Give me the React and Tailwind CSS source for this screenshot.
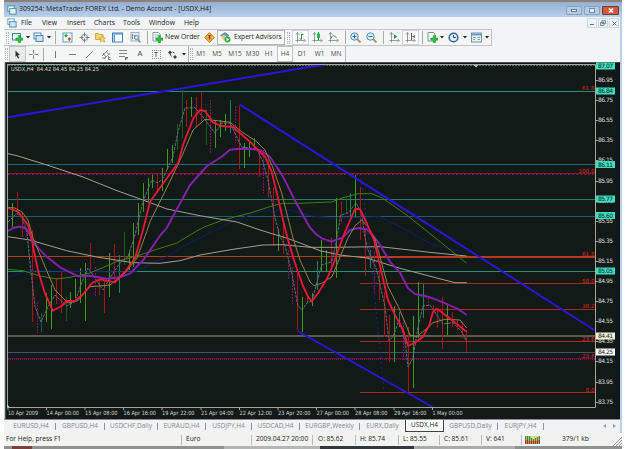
import React from 'react';

const MENUS = [
  { label: 'File', w: 'w-[21px]' },
  { label: 'View', w: 'w-[25px]' },
  { label: 'Insert', w: 'w-[27px]' },
  { label: 'Charts', w: 'w-[29px]' },
  { label: 'Tools', w: 'w-[26px]' },
  { label: 'Window', w: 'w-[35px]' },
  { label: 'Help', w: 'w-[22px]' },
];

const TIMEFRAMES = [
  { label: 'M1', w: 'w-[14px]' },
  { label: 'M5', w: 'w-[18px]' },
  { label: 'M15', w: 'w-[18px]' },
  { label: 'M30', w: 'w-[17px]' },
  { label: 'H1', w: 'w-[16px]' },
  { label: 'H4', w: 'w-[16px]', active: true },
  { label: 'D1', w: 'w-[18px]' },
  { label: 'W1', w: 'w-[17px]' },
  { label: 'MN', w: 'w-[16px]' },
];

const TABS = [
  { label: 'EURUSD,H4', w: 'w-[49px]' },
  { label: 'GBPUSD,H4', w: 'w-[49px]' },
  { label: 'USDCHF,Daily', w: 'w-[53px]' },
  { label: 'EURAUD,H4', w: 'w-[48px]' },
  { label: 'USDJPY,H4', w: 'w-[46px]' },
  { label: 'USDCAD,H4', w: 'w-[48px]' },
  { label: 'EURGBP,Weekly', w: 'w-[60px]' },
  { label: 'EURX,Daily', w: 'w-[45px]' },
  { label: 'USDX,H4', w: 'w-[39px]', active: true },
  { label: 'GBPUSD,Daily', w: 'w-[54px]' },
  { label: 'EURJPY,H4', w: 'w-[46px]' },
];

const STATUS = [
  { label: 'For Help, press F1', w: 'w-[178px] pl-[2px]' },
  { label: 'Euro', w: 'w-[70px] pl-[4px]' },
  { label: '2009.04.27 20:00', w: 'w-[61px] pl-[4px]' },
  { label: 'O: 85.62', w: 'w-[43px] pl-[5px]' },
  { label: 'H: 85.74', w: 'w-[43px] pl-[4px]' },
  { label: 'L: 85.55', w: 'w-[41px] pl-[4px]' },
  { label: 'C: 85.61', w: 'w-[42px] pl-[4px]' },
  { label: 'V: 641', w: 'w-[40px] pl-[4px]' },
];

const GREEN = '#3f9a12';
const RED = '#b30d16';
const TEAL = '#1f8060';
const PINK = '#8a0f68';
const DARK = '#1c5a1c';

// [x, high, low, colour]
const BARS = [
  [12.5, 203, 227, GREEN], [17.5, 192, 215, RED], [22.5, 212, 237, RED],
  [32.5, 230, 322, RED], [37.5, 302, 333, PINK], [41.5, 313, 332, DARK],
  [46.5, 293, 322, GREEN], [51.5, 285, 329, GREEN], [56.5, 278, 304, RED],
  [61.5, 272, 313, RED], [66.5, 297, 321, DARK], [70.5, 292, 308, GREEN],
  [75.5, 279, 298, GREEN], [80.5, 268, 303, GREEN], [85.5, 263, 321, GREEN],
  [90.5, 243, 270, RED], [95.5, 267, 297, PINK], [99.5, 280, 295, RED],
  [104.5, 277, 313, RED], [109.5, 253, 297, GREEN], [114.5, 244, 283, RED],
  [119.5, 255, 293, TEAL], [124.5, 232, 265, DARK], [129.5, 252, 270, GREEN],
  [133.5, 223, 267, GREEN], [138.5, 203, 235, GREEN], [143.5, 183, 212, GREEN],
  [148.5, 178, 201, GREEN], [152.5, 175, 188, GREEN], [157.5, 174, 190, RED],
  [162.5, 168, 191, GREEN], [167.5, 149, 170, GREEN], [172.5, 145, 163, GREEN],
  [177.5, 124, 150, DARK], [182.5, 89, 138, DARK], [186.5, 100, 127, RED],
  [191.5, 97, 117, GREEN], [196.5, 97, 127, RED], [201.5, 92, 121, RED],
  [206.5, 109, 145, DARK], [210.5, 100, 154, PINK], [215.5, 121, 148, GREEN],
  [220.5, 120, 137, GREEN], [225.5, 114, 131, GREEN], [230.5, 100, 133, TEAL],
  [235.5, 106, 143, PINK], [239.5, 105, 169, RED], [244.5, 143, 168, GREEN],
  [249.5, 142, 157, GREEN], [254.5, 138, 150, GREEN], [259.5, 150, 177, RED],
  [263.5, 150, 193, PINK], [268.5, 158, 198, RED], [273.5, 187, 246, RED],
  [278.5, 229, 251, GREEN], [283.5, 223, 254, RED], [288.5, 250, 279, PINK],
  [292.5, 267, 304, PINK], [297.5, 273, 330, RED], [302.5, 297, 332, GREEN],
  [307.5, 295, 303, RED], [312.5, 293, 306, GREEN], [317.5, 261, 290, TEAL],
  [321.5, 240, 272, GREEN], [326.5, 250, 272, GREEN], [331.5, 238, 270, RED],
  [336.5, 198, 278, GREEN], [341.5, 202, 222, RED], [346.5, 198, 214, DARK],
  [350.5, 193, 216, TEAL], [355.5, 175, 218, GREEN], [360.5, 187, 240, RED],
  [365.5, 230, 276, RED], [370.5, 250, 268, TEAL], [374.5, 252, 292, PINK],
  [379.5, 270, 300, RED], [384.5, 292, 337, RED], [389.5, 315, 362, RED],
  [394.5, 306, 362, GREEN], [399.5, 312, 327, TEAL], [403.5, 319, 360, PINK],
  [408.5, 327, 392, RED], [413.5, 316, 388, GREEN], [418.5, 282, 338, GREEN],
  [423.5, 284, 318, TEAL], [428.5, 298, 308, PINK], [433.5, 305, 310, RED],
  [437.5, 308, 328, RED], [442.5, 297, 349, RED], [447.5, 305, 335, GREEN],
  [452.5, 312, 327, RED], [457.5, 320, 330, RED], [462.5, 322, 338, RED],
  [466.5, 330, 352, RED],
];

const MA_PURPLE = '8,231 13,228 19,226.5 26,228.5 30,235 33,242.7 46.7,256.7 60,267.3 78.3,276.3 90,275.7 106.7,278.7 120,277.3 130,273.7 143.3,260 160,235.7 166.7,228 190,185 207,166 221.7,156.7 230,149.7 237,149 250,149 260,150 270,156.7 283,176.7 296.7,204 310,227.7 316,234 321.7,238.3 331.7,241.7 343,237.3 350,230 359,228 367,229.5 375,238 380,245 390,261.7 400,272.7 408,288.3 415,294 428,296.7 443,302.3 458,309 466.7,315';
const MA_RED = '8,208 18,211.7 28,225 32,240 33.3,248 38.3,271.7 45,293.3 52.7,310.7 61.7,306 66.7,301 75,301 83.3,294 91.7,283.3 100,279.3 115,282.3 125,271.7 135,258.3 143,230 150,201.7 165,180.7 178.3,162.7 183.3,144 193.3,118.3 200,110 205,111 213,122.3 221.7,126 233,127 250,141.7 258,150 265,156.7 271.7,171.7 278,198 283,220 288,240 295,263.3 303,286 308,296.7 312,301.3 318,293.3 326.7,279.3 333,265 343,236.7 355,209 360,209 366.7,223 374,240 381.7,273.3 388,300 395,315 403,330 408,346 415,342.7 423,336.7 429.3,325 433,311.7 437,308.7 446.7,316 458,325 466.7,331.7';
const MA_YELLOW = '8,207.5 15,208 22,212 28,220 33,238 45,266.7 55,290 68,303 78,300.7 90,286.7 110,285 125,273 137,258 146.7,231.7 150,221.7 166.7,188 181.7,156.7 193,130 205,119.3 220,121 230,122.3 241.7,131.7 256.7,141.7 265,150 273,168 281.7,193 293,238 300,260 310,282 314,285.7 321.7,283.3 332,276.7 341.7,253 348,238 355,225.7 361.7,220 368,226.7 375,239 381.7,263 388,286.7 398,306 404,320 410,335 416.7,336.7 425,330 433,322.7 445,319.3 460,320 466.7,328';
const MA_SLATE = '8,222 17,213 22,217 27,233 30,263 35,306.7 41,322 48,306.7 55,295 66.7,306 75,301.7 81.7,283 88,268 95,278 103,290 111.7,275 120,263 128,256.7 135,235 143,201.7 151.7,180 158,183 163,178 173,156.7 178,131.7 185,108 195,107.7 203,117 215,133 221.7,123 230,123 236.7,136.7 241.7,147 256.7,149 263,161.7 268,180 275,218 280,236.7 285,245 291.7,273 297.7,305 302,310 308,301.7 312,301.7 316.7,283 321.7,265 331.7,261.7 336,243 340.7,215 348,213 356,203 361.7,213 365,238 368,250 376.7,270 385,306.7 389,340.7 393,336.7 399,320 405,340 408,367 413,358 418,326.7 423,306 430,305 436.7,315 443,324 453,322.7 461.7,331.7 466.7,341.7';
const MA_WHITE_A = '8,153.7 17,155.7 47,165 83,177 117,190.7 143,200 167,209 200,215.7 237,222 260,230 288,238.5 300,243 320,250.7 340,255 366.7,258 400,268.3 433,277 455,282.7 466.7,282.7';
const MA_WHITE_B = '8,236.7 30,240 66.7,250.7 96.7,257 133,262.7 160,263.3 180,260.7 200,255 233,249.3 263,245 283,244.7 310,247.3 333,247.3 380,246.7 410,250 433,252.7 466.7,256';
const MA_GREEN = '8,269.3 23,270.7 40,276 56.7,279 70,277.3 90,273 116.7,261.7 140,255 160,248.3 176.7,243 196.7,231 205,226.7 223,220 250,213 273,205.7 283,203.3 300,203.3 331.7,202 343,197.7 358,193.7 371.7,193.7 381.7,197.7 406.7,215 436.7,239 466.7,263.3';
const MA_NAVY = '8,277 25,271.7 37,271 135,272 150,264 166.7,256.7 183,246.7 200,238 233,221 260,211.7 290,210 310,215.7 332,218 380,216.7 400,226.7 433,245 465,252.7';

const PRICES = [
  ['86.95', 80], ['86.75', 100], ['86.55', 120], ['86.35', 140], ['86.15', 160],
  ['85.95', 181], ['85.75', 201], ['85.55', 221], ['85.35', 241], ['85.15', 261],
  ['84.95', 281], ['84.75', 301], ['84.55', 321], ['84.35', 341], ['84.15', 361],
  ['83.95', 382], ['83.75', 402],
];

const PRICE_TAGS = [
  ['87.07', 66, '#3fdcc0'], ['86.84', 91, '#3fdcc0'], ['86.11', 164.5, '#3fdcc0'],
  ['85.77', 199, '#3fdcc0'], ['85.60', 215.5, '#3fdcc0'], ['85.05', 271, '#3fdcc0'],
  ['84.41', 336, '#f3efd2'], ['84.25', 352, '#ffffff'],
];

const FIBS = [
  ['61.8', 88], ['100.0', 171], ['61.8', 253.5], ['50.0', 280.5],
  ['38.2', 306], ['23.6', 338.5], ['23.6', 356], ['0.0', 389.5],
];

const DATES = [
  ['10 Apr 2009', 8], ['14 Apr 00:00', 46.5], ['15 Apr 08:00', 85], ['16 Apr 16:00', 123.5],
  ['19 Apr 22:00', 162], ['21 Apr 04:00', 201], ['22 Apr 12:00', 239.5], ['23 Apr 20:00', 278],
  ['27 Apr 00:00', 316.5], ['28 Apr 08:00', 355], ['29 Apr 16:00', 394], ['1 May 00:00', 432.5],
];

const Slot = ({ w, className = '', children }) => (
  <div className={`flex h-full shrink-0 items-center justify-center ${w} ${className}`}>{children}</div>
);

const Sep = () => <div className="h-[13px] w-px shrink-0 bg-[#a9adb1]"></div>;

const Grip = () => (
  <div className="h-[12px] w-[3px] shrink-0 border-x border-dotted border-[#aab6bd]"></div>
);

const Caret = () => (
  <svg className="h-[3px] w-[4px]" viewBox="0 0 4 3"><path d="M0 0h4L2 2.5z" fill="#222" /></svg>
);

const Icon = ({ children, size = 'h-[11px] w-[11px]' }) => (
  <svg className={`shrink-0 ${size}`} viewBox="0 0 11 11" fill="none">{children}</svg>
);

const PlusMark = () => <path d="M6.2 3.5h2.3V6H11v2.200H8.500v2.500H6.200V8.200H3.800V6h2.400z" fill="#25c640" stroke="#148a2a" strokeWidth=".5" />;

const Axes = () => (
  <path d="M2.5 .5v10M.5 8.5h9M1 2.5L2.500 .5 4 2.500M8.500 7l2 1.500-2 1.500" stroke="#7b8685" strokeWidth=".8" />
);

const TitleBar = () => (
  <div className="flex h-[15px] shrink-0 items-center bg-gradient-to-b from-[#94afcf] to-[#b9d0ec] pl-[3px] pr-[3px]">
    <Icon size="h-[10px] w-[10px]">
      <rect x="1" y="1" width="7" height="6" fill="#fff" stroke="#3f8f9c" />
      <rect x="3" y="4" width="7" height="6" fill="#e8f4f4" stroke="#3f8f9c" />
    </Icon>
    <span className="ml-[2px] whitespace-nowrap text-[6.85px] leading-none text-[#17202b]">309254: MetaTrader FOREX Ltd. - Demo Account - [USDX,H4]</span>
    <div className="ml-auto flex gap-[2px] self-start pt-[4px]">
      <div className="flex h-[9px] w-[16px] items-center justify-center rounded-[1px] border border-[#8ba0bb] bg-[#b5cae4]">
        <div className="h-[3px] w-[6px] border border-[#66778c] bg-white"></div>
      </div>
      <div className="flex h-[9px] w-[16px] items-center justify-center rounded-[1px] border border-[#8ba0bb] bg-[#b5cae4]">
        <div className="h-[5px] w-[6px] border border-[#7b8ca1] bg-[#dbe6f2]"></div>
      </div>
      <div className="flex h-[9px] w-[17px] items-center justify-center rounded-[1px] border border-[#6f3b33] bg-[#cf5a3c]">
        <svg className="h-[5px] w-[6px]" viewBox="0 0 6 5"><path d="M1 .5l4 4M5 .5l-4 4" stroke="#fff" strokeWidth="1.5" /></svg>
      </div>
    </div>
  </div>
);

const MenuBar = () => (
  <div className="flex h-[12px] shrink-0 items-center bg-[#f2f4f5] pl-[3px] pr-[1px]">
    <Icon size="h-[10px] w-[10px]">
      <rect x="1" y="1" width="7" height="6" fill="#fff" stroke="#5a9db0" />
      <rect x="3" y="4" width="7" height="6" fill="#cde7f2" stroke="#4d87b4" />
    </Icon>
    <div className="ml-[3px] flex">
      {MENUS.map(m => (
        <span key={m.label} className={`shrink-0 whitespace-nowrap pl-[1px] text-[6.9px] leading-none text-[#222] ${m.w}`}>{m.label}</span>
      ))}
    </div>
    <div className="ml-auto flex gap-px">
      <div className="flex h-[10px] w-[10px] items-center justify-center border border-[#ccd9e6] bg-[#eef4fa]">
        <div className="mt-[3px] h-px w-[4px] bg-[#5a7289]"></div>
      </div>
      <div className="flex h-[10px] w-[10px] items-center justify-center border border-[#ccd9e6] bg-[#eef4fa]">
        <svg className="h-[6px] w-[6px]" viewBox="0 0 6 6"><path d="M2 .5h3.5v3H2zM.5 2.5H4v3H.5z" fill="#dfe9f3" stroke="#5a7289" strokeWidth=".8" /></svg>
      </div>
      <div className="flex h-[10px] w-[10px] items-center justify-center border border-[#ccd9e6] bg-[#eef4fa]">
        <svg className="h-[5px] w-[5px]" viewBox="0 0 5 5"><path d="M.5 .5l4 4M4.5 .5l-4 4" stroke="#5a7289" /></svg>
      </div>
    </div>
  </div>
);

const MainToolbar = () => (
  <div className="flex h-[17px] w-[488px] shrink-0 items-center border-y border-r border-[#c3c6c4] bg-[#f4f5f5]">
    <Slot w="w-[7px]"><Grip /></Slot>
    <Slot w="w-[13px]">
      <Icon><rect x=".5" y="1.5" width="8" height="6.5" fill="#fff" stroke="#3f86a0" /><PlusMark /></Icon>
    </Slot>
    <Slot w="w-[7px]"><Caret /></Slot>
    <Slot w="w-[15px]">
      <Icon><rect x="1" y="1" width="7" height="6" fill="#fff" stroke="#4687b8" /><rect x="3" y="3.5" width="7" height="6" fill="#cfe4f5" stroke="#4687b8" /></Icon>
    </Slot>
    <Slot w="w-[6px]"><Caret /></Slot>
    <Slot w="w-[6px]"><Sep /></Slot>
    <Slot w="w-[18px]">
      <Icon>
        <rect x="1" y="1" width="9" height="9" fill="#f4fbff" stroke="#64a0bb" />
        <path d="M2.2 3.5l1.8-1.8 1.8 1.8L4 5.800z" fill="#1fa83a" />
        <path d="M5.500 6.800l1.800-1.600 1.800 1.600-1.800 2.400z" fill="#d6452a" />
      </Icon>
    </Slot>
    <Slot w="w-[16px]">
      <Icon><circle cx="5.5" cy="5.5" r="3" stroke="#747d82" /><path d="M5.5 .5v4M5.5 6.5v4M.5 5.5h4M6.5 5.5h4" stroke="#747d82" /></Icon>
    </Slot>
    <Slot w="w-[17px]">
      <Icon>
        <path d="M.5 1.5h3l1 1H8v5H.5z" fill="#f3d37a" stroke="#c79a35" strokeWidth=".8" />
        <path d="M7.5 4l1 2h2L9 7.5l.7 2.5-2.2-1.2L5.3 10 6 7.5 4.5 6h2z" fill="#ffdf55" stroke="#c88a22" strokeWidth=".6" />
      </Icon>
    </Slot>
    <Slot w="w-[17px]">
      <Icon><rect x=".5" y="1" width="10" height="9" fill="#fff" stroke="#3f80bd" /><path d="M1 2h9M2.2 3v6.5" stroke="#3f80bd" strokeWidth="1.2" /></Icon>
    </Slot>
    <Slot w="w-[18px]">
      <Icon>
        <rect x="1" y=".5" width="8" height="8.5" fill="#dfe9f1" stroke="#8ba3b8" strokeWidth=".8" />
        <path d="M2.5 2v5M4.5 3v4" stroke="#9a7f6a" /><circle cx="6.5" cy="5.5" r="2" fill="#cfe6f6" stroke="#6c8fb0" /><path d="M8 7.5l2.5 3" stroke="#6c8fb0" strokeWidth="1.4" />
      </Icon>
    </Slot>
    <Slot w="w-[6px]"><Sep /></Slot>
    <Slot w="w-[14px]">
      <Icon><path d="M1 .5h5.5L8 2v7H1z" fill="#fff" stroke="#6c8794" strokeWidth=".8" /><path d="M2.5 3h4M2.5 5h3" stroke="#91a5b0" strokeWidth=".8" /><PlusMark /></Icon>
    </Slot>
    <Slot w="w-[37px]" className="whitespace-nowrap text-[6.8px] leading-none text-[#222]">New Order</Slot>
    <Slot w="w-[16px]">
      <Icon><path d="M5.5 .5l5 5-5 5-5-5z" fill="#efaa42" stroke="#bc7a25" strokeWidth=".8" /><path d="M4.5 3.500H7M5.500 3.500v4M4.500 5.500h2" stroke="#a33c16" /></Icon>
    </Slot>
    <div className="flex h-[15px] w-[68px] shrink-0 items-center gap-[3px] border border-[#b1b5b4] bg-[#f8f9f9] pl-[2px]">
      <Icon>
        <path d="M.5 3.5L5 .5l4 3L5 6z" fill="#549dc9" stroke="#3a728f" strokeWidth=".6" />
        <circle cx="4" cy="5.5" r="2.5" fill="#efc576" />
        <circle cx="7.5" cy="7.5" r="3" fill="#25b33a" /><path d="M6.5 5.8l2.8 1.7-2.8 1.7z" fill="#fff" />
      </Icon>
      <span className="whitespace-nowrap text-[6.6px] leading-none text-[#222]">Expert Advisors</span>
    </div>
    <Slot w="w-[7px]"><Grip /></Slot>
    <Slot w="w-[17px]" className="border border-[#d3d6d6] bg-[#f9fafa]">
      <Icon><Axes /><path d="M6.5 2v5.5M6.5 2.5h2M5 7h1.5" stroke="#279b3e" /></Icon>
    </Slot>
    <Slot w="w-[16px]"><Icon><Axes /><path d="M6.5 0v8" stroke="#168a34" /><rect x="5" y="1.5" width="3" height="4.5" fill="#25bd48" /></Icon></Slot>
    <Slot w="w-[17px]"><Icon><Axes /><path d="M3 6.5C4 4 5 3 6.5 4l2 2" stroke="#35915a" /></Icon></Slot>
    <Slot w="w-[6px]"><Sep /></Slot>
    <Slot w="w-[14px]">
      <Icon><path d="M6.5 6.5l4 4" stroke="#b7985a" strokeWidth="2" /><circle cx="4.5" cy="4.5" r="3.7" fill="#d9efff" stroke="#4d8cc0" /><path d="M2.5 4.5h4M4.5 2.5v4" stroke="#2d6da8" /></Icon>
    </Slot>
    <Slot w="w-[18px]">
      <Icon><path d="M6.5 6.5l4 4" stroke="#b7985a" strokeWidth="2" /><circle cx="4.5" cy="4.5" r="3.7" fill="#d9efff" stroke="#4d8cc0" /><path d="M2.5 4.5h4" stroke="#2d6da8" /></Icon>
    </Slot>
    <Slot w="w-[6px]"><Sep /></Slot>
    <Slot w="w-[16px]"><Icon><Axes /><path d="M5 2.5l3.5 2L5 7z" fill="#2a9d4d" /></Icon></Slot>
    <Slot w="w-[17px]" className="border border-[#d3d6d6] bg-[#f9fafa]"><Icon><Axes /><path d="M6.5 1v7" stroke="#4c5b66" /><path d="M10 3v3L7 4.5z" fill="#c2512e" /></Icon></Slot>
    <Slot w="w-[6px]"><Sep /></Slot>
    <Slot w="w-[14px]"><Icon><path d="M1 .5h5.5L8 2v7H1z" fill="#fff" stroke="#5f7f70" strokeWidth=".8" /><PlusMark /></Icon></Slot>
    <Slot w="w-[6px]"><Caret /></Slot>
    <Slot w="w-[17px]"><Icon><circle cx="5.5" cy="5.5" r="4.3" fill="#eaf4ff" stroke="#2f66ac" strokeWidth="1.6" /><path d="M5.5 3v2.5H8" stroke="#333" strokeWidth=".9" /></Icon></Slot>
    <Slot w="w-[6px]"><Caret /></Slot>
    <Slot w="w-[16px]"><Icon><rect x=".5" y="1" width="10" height="9" fill="#e8f2f8" stroke="#6b94b4" /><path d="M1 2.5h9" stroke="#6d9bc4" strokeWidth="2" /><path d="M2 5.5h3M6.5 5.5H9M2 7.5h2M6.5 7.5H9" stroke="#8ba381" /></Icon></Slot>
    <Slot w="w-[6px]"><Caret /></Slot>
  </div>
);

const DrawToolbar = () => (
  <div className="flex h-[16px] w-[342px] shrink-0 items-center border-r border-[#b7bab9] bg-[#f4f5f5]">
    <Slot w="w-[5px]"><Grip /></Slot>
    <Slot w="w-[17px]" className="border border-[#c2c6c6] bg-[#e9ebeb]">
      <Icon><path d="M3.5 1.5l4.500 4.500-2.200.2 1.300 2.800-1.300.5-1.200-2.800-1.100 1.300z" fill="#2f3335" /></Icon>
    </Slot>
    <Slot w="w-[14px]"><Icon><path d="M5.5 1v3.5M5.5 6.5V10M1 5.5h3.5M6.5 5.5H10" stroke="#7b8184" /></Icon></Slot>
    <Slot w="w-[6px]"><Sep /></Slot>
    <Slot w="w-[18px]"><Icon><path d="M5.5 2v7" stroke="#73797c" /></Icon></Slot>
    <Slot w="w-[17px]"><Icon><path d="M2 5.5h7" stroke="#73797c" /></Icon></Slot>
    <Slot w="w-[17px]"><Icon><path d="M2 9l7-7" stroke="#73797c" /></Icon></Slot>
    <Slot w="w-[16px]"><Icon><path d="M1 7l6-6M3 10l6-6M2 4l3 4M5 2l3 4M1 9h4M7.5 7v3.5H10M7.5 8.7h2" stroke="#666c6f" strokeWidth=".8" /></Icon></Slot>
    <Slot w="w-[18px]"><Icon><path d="M1 1.5h8M1 4.500h8M1 7.500h6" stroke="#83898c" /><path d="M7.5 11V8.5H10M7.5 9.7h2" stroke="#444" strokeWidth=".8" /></Icon></Slot>
    <Slot w="w-[16px]" className="text-[7.5px] font-semibold leading-none text-[#5f6365]">A</Slot>
    <Slot w="w-[16px]"><div className="flex h-[9px] w-[9px] items-center justify-center border border-dotted border-[#8d9396] text-[7px] font-semibold leading-none text-[#55595b]">T</div></Slot>
    <Slot w="w-[17px]"><Icon><path d="M1 3.5l2-2 2 2-2 2zM6 8l2-2 2 2-2 2z" fill="#3c4144" /><path d="M3 5l1.5 2.5M5.5 3l2 1" stroke="#3c4144" /></Icon></Slot>
    <Slot w="w-[5px]"><Caret /></Slot>
    <Slot w="w-[2px]" />
    <Slot w="w-[6px]" className="border-l border-[#a9adb1]"><Grip /></Slot>
    {TIMEFRAMES.map(t => (
      <Slot key={t.label} w={t.w} className={`text-[6.5px] leading-none text-[#4a4e50] ${t.active ? 'border border-[#bcc0c0] bg-[#fafbfb]' : ''}`}>
        {t.label}
      </Slot>
    ))}
  </div>
);

const Line = ({ points, stroke, width = 1, ...rest }) => (
  <polyline points={points} stroke={stroke} strokeWidth={width} fill="none" strokeLinejoin="round" {...rest} />
);

const Chart = () => (
  <svg className="block h-[357px] w-[615px] shrink-0" viewBox="5 62 615 357" fontFamily="'DejaVu Sans', sans-serif">
    <rect x="5" y="62" width="615" height="357" fill="#111a16" />
    <path d="M5 62.5h614M5.5 62v357" stroke="#4a4d4b" />

    {/* horizontal levels */}
    <path d="M8 65.5h587" stroke="#1e7a70" strokeDasharray="2 1" />
    <path d="M8 91.5h587" stroke="#278f76" />
    <path d="M8 164.5h587" stroke="#1f6677" />
    <path d="M8 173.5h587" stroke="#8a1622" />
    <path d="M8 174.5h587" stroke="#7a1070" strokeDasharray="2 2" />
    <path d="M8 199.5h587" stroke="#20806f" />
    <path d="M8 216.5h587" stroke="#1c5a76" />
    <path d="M8 256.5h587" stroke="#b43c1c" />
    <path d="M360 257h235" stroke="#b43c1c" strokeWidth="2" />
    <path d="M8 271.5h587" stroke="#229274" />
    <path d="M8 336h587" stroke="#5f584a" strokeWidth="2" />
    <path d="M8 352.5h587" stroke="#45506a" />
    <path d="M8 358.5h587" stroke="#6d1040" />
    <path d="M8 359.5h587" stroke="#6d1070" strokeDasharray="1 1" />
    <path d="M360 283.5h235M360 309.5h235M360 341.5h235M360 392.5h235" stroke="#a8281c" />

    {BARS.map(([x, high, low, color], i) => (
      <path key={i} d={`M${x} ${high}V${low}`} stroke={color} strokeDasharray={color === PINK ? '2 1' : undefined} />
    ))}

    <Line points={MA_NAVY} stroke="#131f66" />
    <Line points="361,178 365,210 370,250 375,300 379,340 384,392" stroke="#1a24a0" strokeDasharray="2 3" />
    <Line points={MA_GREEN} stroke="#3f7d0c" />
    <Line points={MA_WHITE_A} stroke="#a59d93" />
    <Line points={MA_WHITE_B} stroke="#a59d93" />
    <Line points={MA_SLATE} stroke="#5a7180" strokeDasharray="3 1" />
    <Line points={MA_PURPLE} stroke="#8420ae" width={1.9} />
    <Line points={MA_YELLOW} stroke="#94813c" />
    <Line points={MA_RED} stroke="#ee1638" width={1.8} />

    {/* trend lines */}
    <path d="M8 117.3L325 64.5M239.5 104.3L595 330.5M297.5 331L432.5 407" stroke="#2d14dc" strokeWidth="2" />

    <path d="M7 64.5h588.5M7.5 64.5V407.5H595.5V64.5" stroke="#aaa392" fill="none" />
    <path d="M473.5 65h5L476 67.5z" fill="#b9bfc5" />
    <path d="M7 404.5v3h3z" fill="#c5cdd2" />

    {FIBS.map(([label, y], i) => (
      <text key={i} x="594.5" y={y + 2} fontSize="5.6" fill="#e0261c" textAnchor="end">{label}</text>
    ))}

    {PRICES.map(([label, y]) => (
      <g key={label}>
        <path d={`M596 ${y + 0.5}h2`} stroke="#aaa392" />
        <text x="598" y={y + 2.2} fontSize="6" textLength="15" fill="#d8d9d6">{label}</text>
      </g>
    ))}
    {PRICE_TAGS.map(([label, y, fill]) => (
      <g key={label}>
        <rect x="596" y={y - 3.5} width="19" height="7" fill={fill} />
        <text x="598" y={y + 2.2} fontSize="6" textLength="15" fill="#10231e">{label}</text>
      </g>
    ))}

    {DATES.map(([label, x]) => (
      <g key={label}>
        <path d={`M${x} 408v2`} stroke="#aaa392" />
        <text x={x} y="415.2" fontSize="5.8" textLength={label.length < 12 ? 30 : 32.5} lengthAdjust="spacingAndGlyphs" fill="#d4d6d3">{label}</text>
      </g>
    ))}
    <text x="11" y="71.3" fontSize="5.6" textLength="88" lengthAdjust="spacingAndGlyphs" fill="#dcdedb" xmlSpace="preserve">USDX,H4  84.42 84.45 84.25 84.25</text>
  </svg>
);

const TabStrip = () => (
  <div className="flex h-[14px] shrink-0 items-start border-t border-[#888d8b] bg-[#f0f2f3] pl-[3px] text-[6.5px] leading-none text-[#85898b]">
    {TABS.map(t => (t.active ? (
      <div key={t.label} className={`flex h-[12px] shrink-0 items-center justify-center border border-t-0 border-[#444] bg-white text-[#222] ${t.w}`}>{t.label}</div>
    ) : (
      <div key={t.label} className={`flex h-[12px] shrink-0 items-center justify-center whitespace-nowrap ${t.w}`}>
        <span className="flex-1 text-center">{t.label}</span>
        {t.label !== 'EURX,Daily' && <span className="h-[7px] w-px bg-[#8f9395]"></span>}
      </div>
    )))}
    <div className="ml-auto flex h-[12px] items-center gap-[7px] pr-[4px]">
      <svg className="h-[4px] w-[3px]" viewBox="0 0 3 4"><path d="M3 0v4L0 2z" fill="#9da1a4" /></svg>
      <svg className="h-[4px] w-[3px]" viewBox="0 0 3 4"><path d="M0 0v4l3-2z" fill="#9da1a4" /></svg>
    </div>
  </div>
);

const StatusBar = () => (
  <div className="flex h-[13px] shrink-0 items-center bg-[#f2f3f1] text-[6.6px] leading-none text-[#1a1a1a]">
    {STATUS.map(s => (
      <div key={s.label} className={`flex h-[10px] shrink-0 items-center whitespace-nowrap border-r border-[#b9bcba] ${s.w}`}>{s.label}</div>
    ))}
    <svg className="ml-[3px] h-[8px] w-[15px] shrink-0" viewBox="0 0 15 8">
      <rect width="15" height="8" fill="#d9d59a" />
      <path d="M.5 0v4M2.5 0v4M4.5 0v5M6.5 2v3M8.5 3v2M10.5 2v3M12.5 1v3M14.5 0v4" stroke="#3f8d2c" strokeWidth="1.3" />
      <path d="M.5 4v4M2.5 4v4M4.5 5v3M6.5 5v3M8.5 5v3M10.5 5v3M12.5 4v4M14.5 4v4" stroke="#a5382a" strokeWidth="1.500" />
    </svg>
    <span className="ml-[22px] whitespace-nowrap">379/1 kb</span>
    <svg className="ml-auto h-[9px] w-[9px] self-end" viewBox="0 0 9 9"><path d="M0 9l9-9M3 9l6-6M6 9l3-3" stroke="#8f9592" /></svg>
  </div>
);

export default function App() {
  return (
    <div className="h-[449px] w-[625px] overflow-hidden bg-white pl-[4px] pr-[3px] font-['Open_Sans','Noto_Sans',sans-serif]">
      <div className="flex h-[449px] w-[618px] flex-col bg-[#f2f4f5]">
        <div className="h-[2px] shrink-0 bg-[#8d8079]"></div>
        <TitleBar />
        <div className="flex h-[416px] shrink-0 border-r-2 border-[#b9d0ec]">
          <div className="flex w-[616px] flex-col">
            <MenuBar />
            <MainToolbar />
            <DrawToolbar />
            <div className="flex shrink-0 border-l border-[#b9cfe2]"><Chart /></div>
            <TabStrip />
          </div>
        </div>
        <StatusBar />
        <div className="flex h-[3px] shrink-0 bg-[#8f9290]">
          <div className="ml-[8px] w-[20px] bg-[#7b4038]"></div>
          <div className="ml-[192px] w-[96px] bg-[#b4b7b5]"></div>
          <div className="w-[94px] bg-[#33383c]"></div>
          <div className="w-[101px] bg-[#a9acab]"></div>
        </div>
      </div>
    </div>
  );
}
